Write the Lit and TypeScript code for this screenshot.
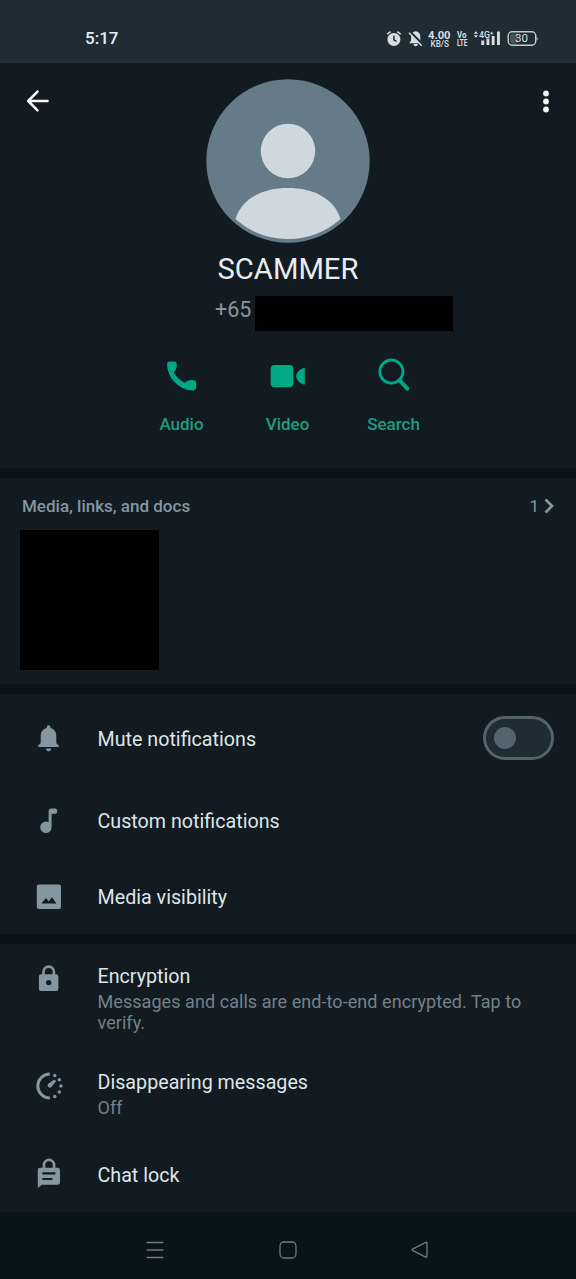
import { LitElement, html, css, svg } from 'lit';
import { customElement, property, state } from 'lit/decorators.js';

const glyphs: Record<string, unknown> = {
  bell: svg`<path d="M20 6.3a1.9 1.9 0 0 1 1.9 1.9v.7c3.9.9 5.800 4.1 5.800 8.1v7.3l2.5 2.3v1.4H9.6v-1.4l2.5-2.3V17c0-4 2.1-7.2 6-8.1v-.7A1.9 1.9 0 0 1 20 6.3zM17.4 29.6h5.2a2.6 2.6 0 0 1-5.2 0z"/>`,
  note: svg`<path d="M23 7.500h3.600a1.900 1.900 0 0 1 1.900 1.900v1.500a1.900 1.900 0 0 1-1.900 1.900H23v13.500a5.700 5.700 0 1 1-3-5V10.500a3 3 0 0 1 3-3z"/>`,
  image: svg`<path fill-rule="evenodd" d="M10.300 7.500h20a2.100 2.100 0 0 1 2.100 2.100v20.400a2.100 2.100 0 0 1-2.100 2.100h-20a2.100 2.100 0 0 1-2.100-2.100V9.600A2.100 2.100 0 0 1 10.300 7.500zM12.800 26.500h15l-4.400-6.300-3.300 4.400-2.800-3.700z"/>`,
  lock: svg`<path fill-rule="evenodd" d="M13.600 15.300v-2.500a6.500 6.500 0 0 1 13 0v2.500h.9a2.300 2.300 0 0 1 2.300 2.300v12.200a2.300 2.300 0 0 1-2.300 2.300H12.600a2.300 2.300 0 0 1-2.300-2.300V17.600a2.300 2.300 0 0 1 2.300-2.300zM16.200 15.300h7.800v-2.500a3.900 3.900 0 0 0-7.800 0zM20.100 20.900a2.700 2.700 0 1 0 0 5.400 2.700 2.700 0 0 0 0-5.400z"/>`,
  timer: svg`<path d="M21.200 8A12 12 0 0 0 21.200 32" fill="none" stroke="currentColor" stroke-width="3"/><g><circle cx="26.200" cy="9.500" r="1.700"/><circle cx="30.700" cy="13.800" r="1.700"/><circle cx="32.300" cy="20" r="1.700"/><circle cx="30.700" cy="26" r="1.700"/><circle cx="26.200" cy="30.500" r="1.700"/></g><path d="M26.900 14.400c.5.500.4.900.1 1.300l-4.400 5.500a2.300 2.300 0 0 1-3.200-3.200l5.600-3.900c.6-.4 1.400-.3 1.900.3z"/>`,
  chatlock: svg`<path fill-rule="evenodd" d="M14 14.700V12a6.400 6.400 0 0 1 12.800 0v2.700h2.200a2.400 2.400 0 0 1 2.400 2.400v12.300a2.400 2.400 0 0 1-2.400 2.400H13.300L9.200 35V17.100a2.400 2.400 0 0 1 2.400-2.400zM16.700 14.700h7.400V12a3.700 3.700 0 0 0-7.400 0zM13.800 19.200v2.200h13v-2.200zM13.800 24.900v2.200h10v-2.200z"/>`,
  audio: svg`<path d="M7.900 5.600h3.900c1.900 0 3 1.200 3 2.900 0 2.200-.1 3.700-1.300 5.500l-1.700 2.600c2.700 4.600 6 7.700 10.700 10.200l2.400-1.500c1.700-1.100 3.200-1.300 5.600-1.300 2.200 0 3.700 1.200 3.700 3.200v3.900c0 2.200-1.200 3.400-3.200 3.400C17.800 34.500 5.100 22.300 5.100 8.300c0-1.700 1.100-2.700 2.800-2.700z"/>`,
  video: svg`<path d="M6.300 9h15.400a3.600 3.600 0 0 1 3.600 3.600v15a3.600 3.600 0 0 1-3.600 3.600H6.300a3.600 3.600 0 0 1-3.600-3.600v-15A3.600 3.600 0 0 1 6.300 9zM36.800 12v16.600h-1.300q-6.600-2.300-7.400-8.300q.8-6 7.400-8.300z"/>`,
  search: svg`<g fill="none" stroke="currentColor"><circle cx="17.400" cy="15.600" r="11.600" stroke-width="2.800"/><path d="M25.600 24.300l7.800 8.300" stroke-width="4" stroke-linecap="round"/></g>`,
};

@customElement('settings-row')
class SettingsRow extends LitElement {
  @property() icon = '';
  @property() label = '';
  @property() detail = '';

  static styles = css`
    :host { display: flex; color: #dfe5e8; }
    .icon { width: 40px; height: 40px; margin: var(--icon-top, 0) 0 0 28px; flex: none; color: #8696a0; fill: currentColor; }
    .text { margin-left: 29.500px; flex: 1; min-width: 0; padding-top: var(--text-top, 9px); }
    .label { font-size: 19.700px; line-height: 24px; white-space: nowrap; }
    .detail { font-size: 18px; line-height: 21.300px; color: #74818a; margin-top: 2px; max-width: 440px; letter-spacing: .06px; }
  `;

  render() {
    return html`
      <svg class="icon" viewBox="-0.600 0 40 40">${glyphs[this.icon]}</svg>
      <div class="text">
        <div class="label">${this.label}</div>
        ${this.detail ? html`<div class="detail">${this.detail}</div>` : ''}
      </div>
      <slot></slot>`;
  }
}

@customElement('app-root')
class AppRoot extends LitElement {
  @state() private muted = false;

  static styles = css`
    :host { display: block; width: 576px; height: 1279px; overflow: hidden; background: #08131a; font-family: Roboto, sans-serif; color: #e9edef; }
    * { box-sizing: border-box; }
    svg { display: block; flex: none; }
    .status { height: 63px; background: #1f2c34; display: flex; justify-content: space-between; padding: 14px 36px 0 85px; }
    .clock { font-size: 17px; line-height: 49px; font-weight: 500; }
    .tray { width: 160px; height: 49px; font-weight: 500; fill: #d8dde0; }
    .panel { background: #111b21; margin-bottom: 10px; }
    .profile { height: 404.500px; }
    .top { display: grid; grid-template-columns: 1fr 164px 1fr; padding-top: 16px; }
    .back { margin: 8px 0 0 24px; }
    .more { margin: 8px 18px 0 auto; }
    .name { text-align: center; font-size: 29.200px; line-height: 34px; margin-top: 9px; }
    .phone { display: flex; padding-left: 215px; height: 35px; margin-top: 9.500px; }
    .prefix { font-size: 21.500px; line-height: 27px; width: 40px; color: #8696a0; }
    .redacted { width: 198px; height: 35px; background: #000; }
    .actions { display: grid; grid-template-columns: repeat(3, 106px); margin: 25px 0 0 128.500px; }
    .action { display: flex; flex-direction: column; align-items: center; color: #00a884; fill: currentColor; font-size: 17px; font-weight: 500; line-height: 20px; gap: 18px; }
    .action span { color: #1e9d80; }
    .media { height: 206px; padding: 18.500px 22px 0 22px; }
    .mediahead { display: flex; justify-content: space-between; font-size: 17px; line-height: 20px; font-weight: 500; color: #8696a0; }
    .count { display: flex; align-items: center; gap: 5px; font-weight: 400; }
    .count svg { margin-top: -1px; }
    .thumb { background: #000; width: 139px; height: 140px; margin: 14px 0 0 -2px; }
    .alerts { height: 240px; padding-top: 25px; }
    .alerts settings-row:nth-child(1) { height: 82px; }
    .alerts settings-row:nth-child(2) { height: 76px; }
    .switch { width: 71px; height: 44px; border: 3px solid #54636c; border-radius: 22px; background: #1f2c34; margin: -3px 22px 0 0; padding: 8px; }
    .knob { width: 22px; height: 22px; border-radius: 50%; background: #54656f; }
    .switch.on .knob { margin-left: 27px; }
    .privacy { height: 268px; padding-top: 15px; margin: 0; --text-top: 6px; }
    .privacy settings-row:nth-child(1) { height: 106px; }
    .privacy settings-row:nth-child(2) { height: 93px; --icon-top: 1.500px; }
    .privacy settings-row:nth-child(3) { --icon-top: -4.500px; }
    .nav { height: 67px; display: flex; padding: 28px 146px 0 145px; justify-content: space-between; fill: none; stroke: #737a7e; stroke-width: 1.300; }
  `;

  render() {
    return html`
      <div class="status">
        <div class="clock">5:17</div>
        <svg class="tray" viewBox="380 14 160 49">
          <circle cx="393.900" cy="39.400" r="6.500"/>
          <path d="M387.200 34.200l3.300-2.600M400.600 34.200l-3.300-2.600" stroke="#d8dde0" stroke-width="1.500"/>
          <path d="M393.900 35.800v4l2.600 1.600" fill="none" stroke="#1f2c34" stroke-width="1.500"/>
          <path d="M415.700 31.300c3 .4 4.600 2.500 4.600 5v4.300l2 2.600h-13.200l2-2.600v-4.300c0-2.500 1.600-4.600 4.600-5zM413.500 44h4.400a2.200 2.200 0 0 1-4.400 0z"/>
          <path d="M409.500 31.700l12.800 12.500" stroke="#1f2c34" stroke-width="3"/>
          <path d="M409 32.700l12.800 13" stroke="#d8dde0" stroke-width="1.500"/>
          <text x="428" y="38.700" font-size="11.500" textLength="22.500" lengthAdjust="spacingAndGlyphs" font-weight="700">4.00</text>
          <text x="430.500" y="47" font-size="8.200" textLength="18.500" lengthAdjust="spacingAndGlyphs">KB/S</text>
          <text x="457" y="37.700" font-size="8.200" textLength="9.500" lengthAdjust="spacingAndGlyphs" font-weight="700">Vo</text>
          <text x="457" y="45.700" font-size="8.200" textLength="10.500" lengthAdjust="spacingAndGlyphs" font-weight="700">LTE</text>
          <path d="M473.700 33.800l2.200-2.500 2.200 2.500zM473.700 35.300l2.200 2.500 2.200-2.500z"/>
          <text x="479" y="37.500" font-size="9" textLength="11" lengthAdjust="spacingAndGlyphs">4G</text>
          <path d="M490.300 33.300h3M491.800 31.800v3" stroke="#d8dde0" stroke-width=".9"/>
          <path d="M481.300 40.500h2.900v4.500h-2.900zM486.500 38.500h2.900v6.500h-2.900zM491.700 36h2.900v9h-2.900zM497 31.500h2.900v13.500h-2.900z"/>
          <rect x="508.200" y="31.700" width="27.500" height="13.500" rx="4" fill="none" stroke="#c3cacd" stroke-width="1.400"/>
          <rect x="510" y="33.400" width="8" height="10" rx="2.500" fill="#46535b"/>
          <path d="M536.700 36.500q1.800 2 0 4z"/>
          <text x="515" y="42.400" font-size="11.300" textLength="13" lengthAdjust="spacingAndGlyphs" font-weight="400">30</text>
        </svg>
      </div>

      <section class="panel profile">
        <div class="top">
          <svg class="back" width="30" height="30" viewBox="0 0 30 30" fill="none" stroke="#f5f7f8" stroke-width="2.600" stroke-linecap="round" stroke-linejoin="round"><path d="M23.500 14H4.500M13.500 4.600L4.200 14l9.300 9.400"/></svg>
          <svg width="164" height="164" viewBox="0 0 164 164">
            <circle cx="82" cy="82" r="81.700" fill="#667b88"/>
            <circle cx="82" cy="72" r="27.200" fill="#cfd8df"/>
            <path d="M29.500 140C36 119 57 109 82 109s46 10 52.500 31Q112 160 82 160T29.500 140z" fill="#cfd8df"/>
          </svg>
          <svg class="more" width="24" height="30" viewBox="0 0 24 30" fill="#f5f7f8"><circle cx="12" cy="6.500" r="2.900"/><circle cx="12" cy="14.500" r="2.900"/><circle cx="12" cy="22.500" r="2.900"/></svg>
        </div>
        <div class="name">SCAMMER</div>
        <div class="phone"><span class="prefix">+65</span><div class="redacted"></div></div>
        <div class="actions">
          ${['Audio', 'Video', 'Search'].map((name) => html`
            <div class="action">
              <svg width="40" height="40" viewBox="0 0 40 40">${glyphs[name.toLowerCase()]}</svg>
              <span>${name}</span>
            </div>`)}
        </div>
      </section>

      <section class="panel media">
        <div class="mediahead">
          <span>Media, links, and docs</span>
          <div class="count"><span>1</span><svg width="10" height="16" viewBox="0 0 10 16" fill="none" stroke="#8696a0" stroke-width="2.700"><path d="M1.500 1.500L8 8l-6.500 6.500"/></svg></div>
        </div>
        <div class="thumb"></div>
      </section>

      <section class="panel alerts">
        <settings-row icon="bell" label="Mute notifications">
          <div class="switch ${this.muted ? 'on' : ''}" @click=${() => (this.muted = !this.muted)}><div class="knob"></div></div>
        </settings-row>
        <settings-row icon="note" label="Custom notifications"></settings-row>
        <settings-row icon="image" label="Media visibility"></settings-row>
      </section>

      <section class="panel privacy">
        <settings-row icon="lock" label="Encryption" detail="Messages and calls are end-to-end encrypted. Tap to verify."></settings-row>
        <settings-row icon="timer" label="Disappearing messages" detail="Off"></settings-row>
        <settings-row icon="chatlock" label="Chat lock"></settings-row>
      </section>

      <nav class="nav">
        <svg width="20" height="20" viewBox="0 0 20 20"><path d="M1.500 2.500h17M1.500 10h17M1.500 17.500h17"/></svg>
        <svg width="20" height="20" viewBox="0 0 20 20"><rect x="2" y="2" width="16" height="16" rx="4"/></svg>
        <svg width="20" height="20" viewBox="0 0 20 20" stroke-linejoin="round"><path d="M2.500 9.200L15.800 2.300q1.200-.4 1.200.8v13.400q0 1.200-1.200.7L2.500 10.400q-1-.6 0-1.200z"/></svg>
      </nav>`;
  }
}
